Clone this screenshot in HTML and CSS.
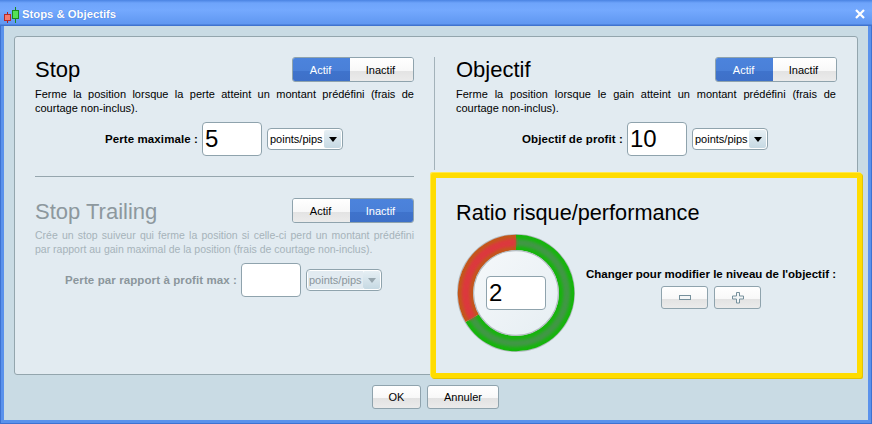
FILE: index.html
```html
<!DOCTYPE html>
<html lang="fr">
<head>
<meta charset="utf-8">
<title>Stops &amp; Objectifs</title>
<link rel="stylesheet" href="styles.css">
</head>
<body>
<div class="window">
  <header class="titlebar">
    <svg class="app-icon" width="18" height="18" viewBox="0 0 18 18">
      <path d="M3.5 6v11" stroke="#b02020" stroke-width="1"/>
      <rect x="0.5" y="8.5" width="6" height="6" fill="#f47a70" stroke="#b52a2a"/>
      <path d="M11.5 1v16" stroke="#1c8a1c" stroke-width="1"/>
      <rect x="8.5" y="4.5" width="6" height="8" fill="#55e055" stroke="#1c8a1c"/>
    </svg>
    <span class="title">Stops &amp; Objectifs</span>
    <svg class="close" width="10" height="10" viewBox="0 0 10 10">
      <path d="M1 1l8 8M9 1l-8 8" stroke="#fff" stroke-width="2.2"/>
    </svg>
  </header>
  <div class="client">
    <main class="panel">
      <div class="col col-left">
        <section class="sec sec-stop">
          <div class="sec-head">
            <h2>Stop</h2>
            <div class="toggle"><span class="seg seg-on">Actif</span><span class="seg seg-off">Inactif</span></div>
          </div>
          <p class="desc">Ferme la position lorsque la perte atteint un montant prédéfini (frais de courtage non-inclus).</p>
          <div class="field field-stop">
            <label>Perte maximale :</label>
            <div class="num">5</div>
            <div class="select"><span>points/pips</span><i class="arrow"><b></b></i></div>
          </div>
        </section>
        <hr class="sep">
        <section class="sec sec-trail disabled">
          <div class="sec-head">
            <h2>Stop Trailing</h2>
            <div class="toggle"><span class="seg seg-off">Actif</span><span class="seg seg-on">Inactif</span></div>
          </div>
          <p class="desc">Crée un stop suiveur qui ferme la position si celle-ci perd un montant prédéfini par rapport au gain maximal de la position (frais de courtage non-inclus).</p>
          <div class="field field-trail">
            <label>Perte par rapport à profit max :</label>
            <div class="num"></div>
            <div class="select"><span>points/pips</span><i class="arrow"><b></b></i></div>
          </div>
        </section>
      </div>
      <div class="col col-right">
        <section class="sec sec-obj">
          <div class="sec-head">
            <h2>Objectif</h2>
            <div class="toggle"><span class="seg seg-on">Actif</span><span class="seg seg-off">Inactif</span></div>
          </div>
          <p class="desc">Ferme la position lorsque le gain atteint un montant prédéfini (frais de courtage non-inclus).</p>
          <div class="field field-obj">
            <label>Objectif de profit :</label>
            <div class="num">10</div>
            <div class="select"><span>points/pips</span><i class="arrow"><b></b></i></div>
          </div>
        </section>
        <section class="ratio">
          <h2>Ratio risque/performance</h2>
          <div class="ratio-body">
            <div class="donut">
              <svg width="118" height="118" viewBox="0 0 118 118">
                <defs>
                  <linearGradient id="disc" x1="0" y1="0" x2="1" y2="1">
                    <stop offset="0" stop-color="#f5f8fa"/>
                    <stop offset="1" stop-color="#e6eef3"/>
                  </linearGradient>
                  <filter id="soft" filterUnits="userSpaceOnUse" x="0" y="0" width="118" height="118"><feGaussianBlur stdDeviation="1.4"/></filter>
                </defs>
                <circle cx="59" cy="59" r="58.4" fill="#f0f3f5" stroke="#b4bcc2" stroke-width="1.2"/>
                <path d="M59 8.5A50.5 50.5 0 1 1 15.3 84.2" fill="none" stroke="#16b40c" stroke-width="15.5"/>
                <path d="M59 8.5A50.5 50.5 0 0 0 15.3 84.2" fill="none" stroke="#c2571a" stroke-width="15.5"/>
                <path d="M59 8.5A50.5 50.5 0 1 1 15.3 84.2" fill="none" stroke="#3f9744" stroke-width="7" filter="url(#soft)"/>
                <path d="M59 8.5A50.5 50.5 0 0 0 15.3 84.2" fill="none" stroke="#dc383c" stroke-width="8" filter="url(#soft)"/>
                <circle cx="59" cy="59" r="42.4" fill="url(#disc)" stroke="#b4bcc2" stroke-width="1.2"/>
              </svg>
              <div class="num num-ratio">2</div>
            </div>
            <div class="change">
              <label>Changer pour modifier le niveau de l'objectif :</label>
              <div class="step-row">
                <button class="btn btn-step" type="button" aria-label="moins">
                  <svg width="12" height="6" viewBox="0 0 12 6"><rect x="0.5" y="0.5" width="11" height="4" fill="#f4f6f7" stroke="#76909c"/></svg>
                </button>
                <button class="btn btn-step" type="button" aria-label="plus">
                  <svg width="12" height="12" viewBox="0 0 12 12"><path d="M4.5.5h3v3.5h4v3h-4v4h-3v-4h-4v-3h4z" fill="#f4f6f7" stroke="#76909c"/></svg>
                </button>
              </div>
            </div>
          </div>
        </section>
      </div>
    </main>
    <footer class="actions">
      <button class="btn btn-ok" type="button">OK</button>
      <button class="btn btn-cancel" type="button">Annuler</button>
    </footer>
  </div>
</div>
</body>
</html>
```
FILE: styles.css
```css
* { box-sizing: border-box; }
html, body { margin: 0; height: 100%; }
body { font-family: "Liberation Sans", Arial, sans-serif; font-size: 11px; color: #000; background: #c9dbe4; }

.window {
  width: 872px; height: 424px; display: flex; flex-direction: column;
  border-left: 1px solid #3d72d2; border-right: 1px solid #3d72d2; border-bottom: 1px solid #3d72d2;
  background: #5a92ec;
}
.titlebar {
  height: 26px; margin: 0 -1px; flex: none; display: flex; align-items: center;
  padding: 1px 7px 0 4px; color: #fff;
  background: linear-gradient(#4a83e2 0, #6ea4fb 3px, #74a9fe 10px, #5f97f1 24px, #3f73cf 25px);
}
.app-icon { flex: none; margin-top: 2px; }
.title { font-size: 11.3px; font-weight: bold; text-shadow: 0 0 1px #3a6fd0; flex: 1; }
.close { flex: none; }

.client {
  flex: 1; margin: 0 3px 3px; padding: 10px 10px 0; background: #c9dbe4;
  display: flex; flex-direction: column;
}
.panel {
  height: 339px; flex: none; display: flex; background: #e2ebf1;
  border: 1px solid #93a5ad; border-radius: 3px;
}
.col { display: flex; flex-direction: column; }
.col-left { width: 415px; }
.col-right { width: 427px; }

.sec-head { display: flex; justify-content: space-between; align-items: flex-start; height: 25px; }
h2 { margin: 0; font-size: 22px; font-weight: normal; line-height: 25px; }
.desc { margin: 5px 0 0; font-size: 11px; line-height: 14px; text-align: justify; }

.sec { padding: 20px 16px 0 20px; }
.sec-stop { height: 139px; }
.sep { width: 379px; height: 1px; margin: 0 0 0 20px; border: 0; background: #96a6ae; flex: none; }
.sec-trail { padding-top: 21px; }
.sec-trail h2 { line-height: 27px; }

.sec-obj {
  height: 113px; margin: 20px 0 3px 4px; padding: 0 20px 0 21px;
  border-left: 1px solid #a3b2ba;
}
.sec-obj .desc { margin-right: 1px; }

.toggle {
  display: flex; width: 122px; height: 25px; border: 1px solid #8fa3ad; border-radius: 3px; overflow: hidden; flex: none;
}
.seg { display: flex; align-items: center; justify-content: center; font-size: 11px; padding-right: 2px; }
.seg:first-child { width: 57px; }
.seg:last-child { flex: 1; }
.seg-on { color: #fff; background: linear-gradient(#4c83dc 0, #4a80d8 55%, #3f73cc 55%, #3e70c8 100%); }
.seg-off { color: #000; background: linear-gradient(#fff 0, #f8f8f8 55%, #e3e3e3 55%, #ebebeb 100%); }

.field { display: flex; align-items: center; justify-content: flex-end; }
.field label { font-weight: bold; font-size: 11.5px; letter-spacing: 0.1px; margin-right: 4px; }
.field-stop { margin-top: 7px; padding-right: 71px; }
.field-trail { margin-top: 7px; padding-right: 32px; }
.field-obj { margin-top: 7px; padding-right: 69px; }

.num {
  width: 60px; height: 34px; flex: none; background: #fff; border: 1px solid #8fa3ad; border-radius: 4px;
  font-size: 24px; line-height: 32px; padding-left: 2px;
}
.select {
  width: 76px; height: 22px; flex: none; margin-left: 5px; padding: 1px; display: flex; align-items: stretch;
  background: #fff; border: 1px solid #8fa3ad; border-radius: 4px; font-size: 11px;
}
.select span { flex: 1; line-height: 18px; padding-left: 1px; white-space: nowrap; }
.arrow {
  width: 17px; flex: none; display: flex; align-items: center; justify-content: center;
  background: linear-gradient(#e6eff4, #c6d9e3); border-radius: 2px;
}
.arrow b { width: 0; height: 0; border: 4px solid transparent; border-top: 5px solid #000; border-bottom: 0; }

.disabled h2 { color: #8d989e; }
.disabled .desc { color: #a6b3ba; font-size: 10.5px; }
.disabled label { color: #8b969c; }
.disabled .select span { color: #8b969c; background: #e2ebf1; }
.disabled .arrow b { border-top-color: #97a6ae; }

.ratio {
  width: 431px; height: 205px; margin: 0 -5px -4px 1px; padding: 22px 20px 0;
  background: #e2ebf1; border: 5px solid #ffdc00; border-radius: 2px;
  box-shadow: 1px 1px 0 #e2c400, -1px -1px 0 #ffe94d;
  display: flex; flex-direction: column;
}
.ratio h2 { font-size: 21.7px; }
.ratio-body { display: flex; margin-top: 9px; }
.donut { width: 118px; height: 118px; margin-left: 1px; display: grid; place-items: center; flex: none; }
.donut > * { grid-area: 1 / 1; }
.donut svg { display: block; }
.num-ratio { position: relative; }
.change { width: 253px; margin-left: 10px; padding-top: 33px; display: flex; flex-direction: column; align-items: center; }
.change label { font-weight: bold; font-size: 11.5px; line-height: 14px; white-space: nowrap; }
.step-row { display: flex; gap: 6px; margin-top: 5px; }

.btn {
  padding: 0; display: flex; align-items: center; justify-content: center;
  font: 11px "Liberation Sans", Arial, sans-serif; color: #000;
  border: 1px solid #8fa3ad; border-radius: 3px;
  background: linear-gradient(#fff 0, #f8f8f8 55%, #e2e2e2 55%, #ebebeb 100%);
}
.btn-step { width: 47px; height: 23px; }
.actions { display: flex; justify-content: center; gap: 6px; padding: 10px 1px 0 0; }
.btn-ok { width: 49px; height: 24px; }
.btn-cancel { width: 72px; height: 24px; }
```
